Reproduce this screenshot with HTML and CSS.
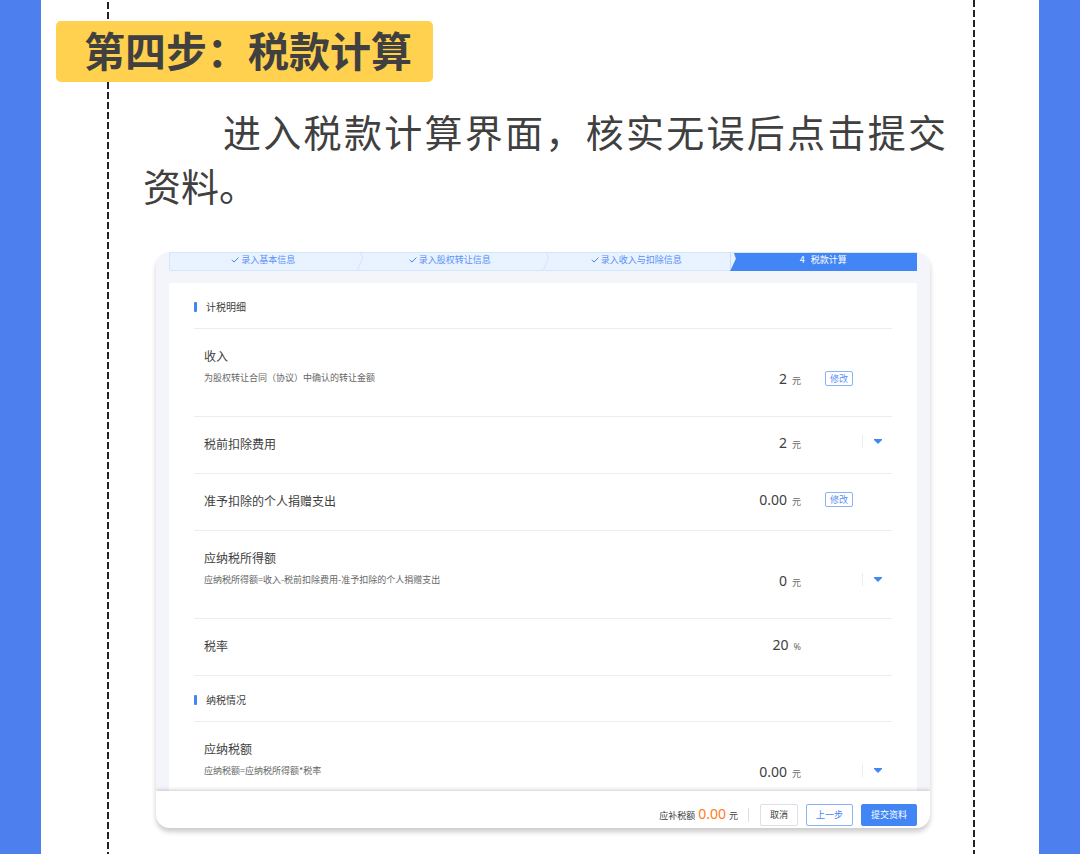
FILE: index.html
```html
<!DOCTYPE html>
<html lang="zh-CN">
<head>
    <meta charset="UTF-8">
    <meta name="viewport" content="width=device-width, initial-scale=1.0">
    <title>第四步：税款计算</title>
    <link rel="stylesheet" href="styles.css">
</head>
<body>

    <main class="sheet">
        <h1 class="step-title">第四步：税款计算</h1>
        <p class="intro">进入税款计算界面，核实无误后点击提交<span class="keep">资料。</span></p>

        <section class="card">
            <div class="card-body">
                <ol class="steps">
                    <li>
                        <svg class="check" viewBox="0 0 8 6"><path d="M0.7 2.8 L3 5.1 L7.4 0.6"/></svg>
                        录入基本信息
                    </li>
                    <li>
                        <svg class="arrow" viewBox="0 0 7 19"><path d="M4 0 L6 6 L0 19"/></svg>
                        <svg class="check" viewBox="0 0 8 6"><path d="M0.7 2.8 L3 5.1 L7.4 0.6"/></svg>
                        录入股权转让信息
                    </li>
                    <li>
                        <svg class="arrow" viewBox="0 0 7 19"><path d="M4 0 L6 6 L0 19"/></svg>
                        <svg class="check" viewBox="0 0 8 6"><path d="M0.7 2.8 L3 5.1 L7.4 0.6"/></svg>
                        录入收入与扣除信息
                    </li>
                    <li class="active">
                        <svg class="arrow" viewBox="0 0 7 19"><path d="M0 0 L4 0 L6 6 L0 19 Z"/></svg>
                        <span>4</span>
                        税款计算
                    </li>
                </ol>

                <div class="panel">
                    <h2 class="section-title">计税明细</h2>

                    <div class="row tall">
                        <div class="info">
                            <h3>收入</h3>
                            <p>为股权转让合同（协议）中确认的转让金额</p>
                        </div>
                        <div class="amount">2<small>元</small></div>
                        <div class="action"><button class="edit-btn">修改</button></div>
                    </div>

                    <div class="row">
                        <div class="info">
                            <h3>税前扣除费用</h3>
                        </div>
                        <div class="amount">2<small>元</small></div>
                        <div class="action">
                            <button class="toggle-btn" aria-label="展开"><svg viewBox="0 0 8 5"><path d="M0 0 H8 V1 L4 5 L0 1 Z"/></svg></button>
                        </div>
                    </div>

                    <div class="row">
                        <div class="info">
                            <h3>准予扣除的个人捐赠支出</h3>
                        </div>
                        <div class="amount">0.00<small>元</small></div>
                        <div class="action"><button class="edit-btn">修改</button></div>
                    </div>

                    <div class="row tall">
                        <div class="info">
                            <h3>应纳税所得额</h3>
                            <p>应纳税所得额=收入-税前扣除费用-准予扣除的个人捐赠支出</p>
                        </div>
                        <div class="amount">0<small>元</small></div>
                        <div class="action">
                            <button class="toggle-btn" aria-label="展开"><svg viewBox="0 0 8 5"><path d="M0 0 H8 V1 L4 5 L0 1 Z"/></svg></button>
                        </div>
                    </div>

                    <div class="row">
                        <div class="info">
                            <h3>税率</h3>
                        </div>
                        <div class="amount">20<small>%</small></div>
                        <div class="action"></div>
                    </div>

                    <h2 class="section-title">纳税情况</h2>

                    <div class="row tall last">
                        <div class="info">
                            <h3>应纳税额</h3>
                            <p>应纳税额=应纳税所得额*税率</p>
                        </div>
                        <div class="amount">0.00<small>元</small></div>
                        <div class="action">
                            <button class="toggle-btn" aria-label="展开"><svg viewBox="0 0 8 5"><path d="M0 0 H8 V1 L4 5 L0 1 Z"/></svg></button>
                        </div>
                    </div>
                </div>
            </div>

            <footer class="card-footer">
                <div class="total">应补税额<strong>0.00</strong>元</div>
                <button class="btn">取消</button>
                <button class="btn btn-outline">上一步</button>
                <button class="btn btn-primary">提交资料</button>
            </footer>
        </section>
    </main>

</body>
</html>
```
FILE: styles.css
```css
* {
    box-sizing: border-box;
}

body {
    margin: 0;
    background-color: #4d80ee;
    color: #404040;
    font-family: "Noto Sans CJK SC", sans-serif;
}

h1, h2, h3, p, ol {
    margin: 0;
    padding: 0;
    font-weight: normal;
}

button {
    font-family: inherit;
    cursor: pointer;
}

/* white sheet with a dashed rule down each side */
.sheet {
    min-height: 100vh;
    margin: 0 41px;
    padding: 21px 0 26px;
    background-color: #fff;
    background-image:
        linear-gradient(#222 7px, transparent 7px),
        linear-gradient(#222 7px, transparent 7px);
    background-size: 2px 10px;
    background-repeat: repeat-y;
    background-position: left 66px top 2px, right 64px top 0;
}

.step-title {
    width: fit-content;
    margin-left: 15px;
    padding: 0 21px 4px 28px;
    border-radius: 5px;
    background-color: #ffd14f;
    font-size: 41px;
    font-weight: bold;
    line-height: 57px;
}

.intro {
    margin: 22px 93px 0 102px;
    font-size: 38px;
    line-height: 54px;
    text-align: justify;
    text-indent: 80px;
}

.keep {
    white-space: nowrap;
}

.card {
    margin: 40px 109px 0 115px;
    border-radius: 14px;
    background-color: #f3f5fa;
    box-shadow: 0 4px 5px rgba(0, 0, 0, 0.2);
    overflow: hidden;
}

.card-body {
    padding: 0 13px;
}

.steps {
    display: grid;
    grid-template-columns: repeat(4, 1fr);
    border: 1px solid #d3e7fa;
    border-radius: 0 0 2px 2px;
    background-color: #e8f3ff;
    color: #5b8ff5;
    font-size: 9px;
    line-height: 14px;
    list-style: none;
}

.steps li {
    display: flex;
    position: relative;
    align-items: center;
    justify-content: center;
    gap: 2px;
    padding-bottom: 3px;
}

.steps .active {
    gap: 6px;
    margin: 0 -1px -1px 0;
    padding-bottom: 4px;
    background-color: #4285f4;
    color: #fff;
}

.check {
    width: 8px;
    height: 6px;
    fill: none;
    stroke: #4285f4;
}

.arrow {
    position: absolute;
    top: 0;
    left: 0;
    width: 7px;
    height: 100%;
    fill: none;
    stroke: #cde3fa;
}

.active .arrow {
    fill: #e8f3ff;
    stroke: none;
}

.panel {
    margin-top: 12px;
    padding: 0 25px;
    border-radius: 2px 2px 0 0;
    background-color: #fff;
}

.section-title {
    display: flex;
    align-items: center;
    gap: 9px;
    height: 46px;
    padding-top: 2px;
    border-bottom: 1px solid #ebedf0;
    font-size: 10px;
}

.section-title::before {
    content: "";
    width: 3px;
    height: 10px;
    border-radius: 1px;
    background-color: #4285f4;
}

.row {
    display: grid;
    grid-template-columns: 1fr auto 91px;
    align-items: start;
    min-height: 57px;
    padding-left: 10px;
    border-bottom: 1px solid #ebedf0;
}

.row.tall {
    min-height: 88px;
}

.row.last {
    min-height: 69px;
    border-bottom: none;
}

.info {
    padding-top: 17px;
}

.info h3 {
    font-size: 12px;
    line-height: 20px;
}

.info p {
    margin-top: 2px;
    color: #666;
    font-size: 9px;
    line-height: 20px;
}

.amount {
    padding-top: 16px;
    font-family: "Noto Sans", "Noto Sans CJK SC", sans-serif;
    font-size: 14px;
    line-height: 20px;
}

.amount small {
    margin-left: 5px;
    color: #666;
    font-size: 9px;
}

.action {
    display: flex;
    align-items: center;
    height: 34px;
    padding: 16px 0 0 24px;
}

.tall .amount {
    padding-top: 40px;
}

.tall .action {
    height: 58px;
    padding-top: 40px;
}

.edit-btn {
    height: 15px;
    padding: 0 4px;
    border: 1px solid #8ab2f8;
    border-radius: 2px;
    background-color: #fff;
    color: #5b8ff5;
    font-size: 9px;
    line-height: 13px;
}

.toggle-btn {
    display: flex;
    align-items: center;
    justify-content: center;
    width: 30px;
    height: 13px;
    margin: 0 0 2px auto;
    padding: 0;
    border: none;
    border-left: 1px solid #ebedf0;
    background: none;
}

.toggle-btn svg {
    width: 8px;
    height: 5px;
    fill: #4285f4;
}

.card-footer {
    display: flex;
    position: relative;
    align-items: center;
    justify-content: flex-end;
    gap: 8px;
    padding: 13px 13px 2px;
    background-color: #fff;
    box-shadow: 0 -1px 4px rgba(0, 0, 0, 0.2);
}

.total {
    margin-right: 3px;
    padding-right: 10px;
    border-right: 1px solid #dcdfe6;
    font-size: 9px;
    line-height: 12px;
}

.total strong {
    margin: 0 3px;
    color: #ff7a1c;
    font-family: "Noto Sans", sans-serif;
    font-size: 14px;
    font-weight: normal;
}

.btn {
    height: 22px;
    padding: 0 9px;
    border: 1px solid #dcdfe6;
    border-radius: 2px;
    background-color: #fff;
    color: #404040;
    font-size: 9px;
    line-height: 20px;
}

.btn-outline {
    border-color: #8ab2f8;
    color: #4285f4;
}

.btn-primary {
    border-color: #4285f4;
    background-color: #4285f4;
    color: #fff;
}
```
